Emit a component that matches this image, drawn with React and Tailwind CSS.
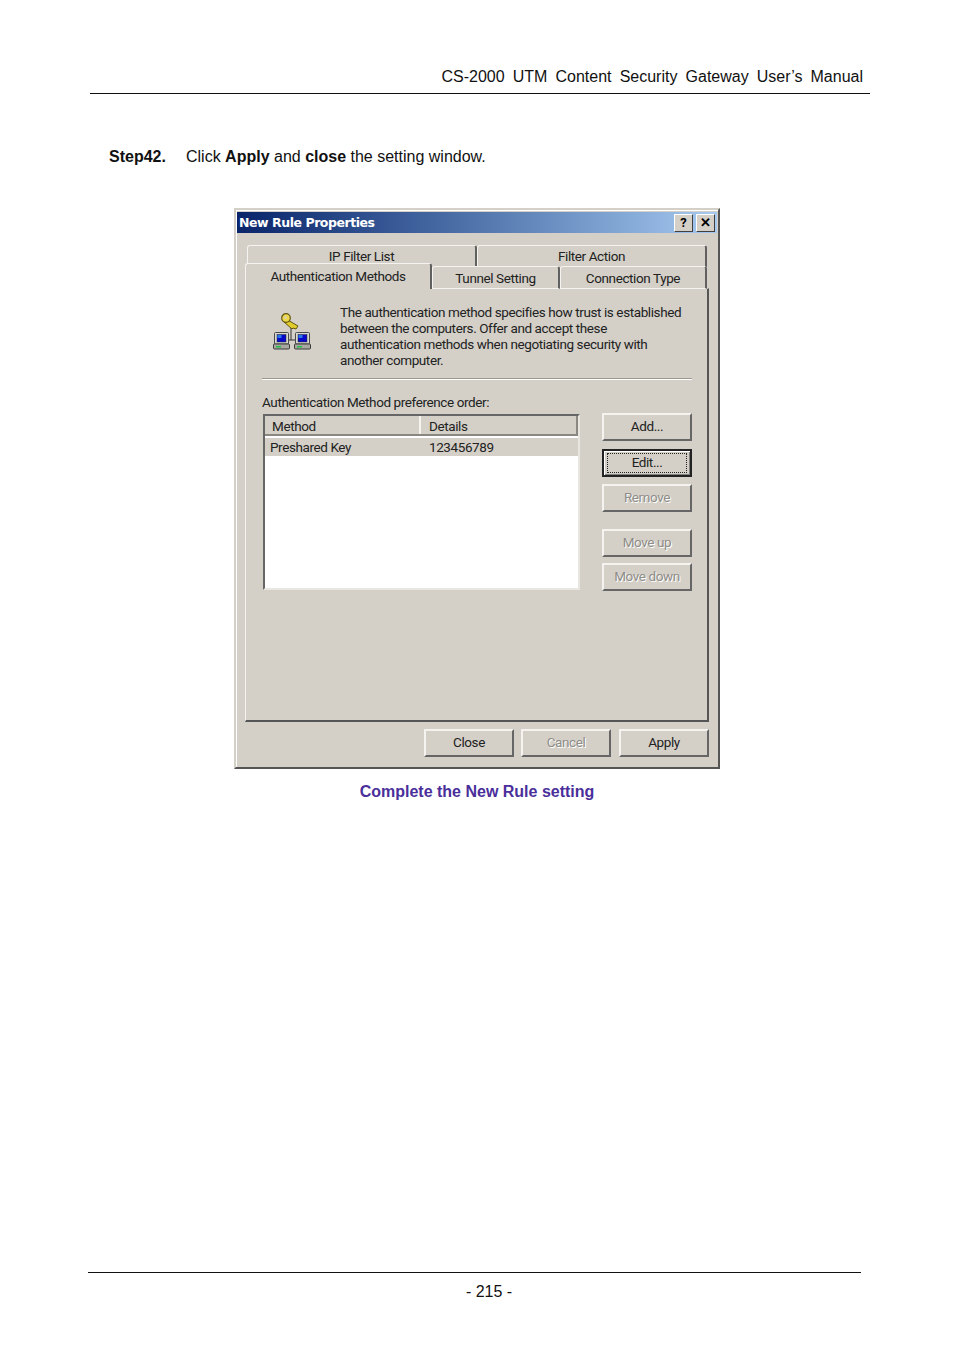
const ui = "font-['Roboto','Liberation_Sans',sans-serif] text-[13.5px] tracking-[-0.4px] text-[#222]";

function Btn({ children, disabled, focus, className = "" }) {
  return (
    <div
      className={`flex w-[90px] h-[28px] items-center justify-center bg-[#d4d0c8] shrink-0 pb-[2px] ${
        focus
          ? "border-2 border-[#222] shadow-[inset_1px_1px_0_#fff,inset_-1px_-1px_0_#808080]"
          : "border-t-2 border-l-2 border-t-[#f4f3f0] border-l-[#f4f3f0] border-r-2 border-b-2 border-r-[#666] border-b-[#666]"
      } ${className}`}
    >
      {focus ? (
        <div className="flex w-[80px] h-[20px] mt-[2px] items-center justify-center border border-dotted border-[#222] pb-[2px]">{children}</div>
      ) : (
        <span className={disabled ? "text-[#8f8d88] [text-shadow:1px_1px_0_#fff]" : ""}>{children}</span>
      )}
    </div>
  );
}

function Tab({ w, h = "h-[22px]", children, active, className = "" }) {
  return (
    <div
      className={`flex items-center justify-center ${w} ${h} bg-[#d4d0c8] rounded-t-[3px] border-l border-t border-l-[#f4f3f0] border-t-[#f4f3f0] border-r-2 border-r-[#606060] ${
        active ? "relative z-10" : ""
      } ${className}`}
    >
      {children}
    </div>
  );
}

function NetIcon() {
  return (
    <svg width="38" height="37" viewBox="0 0 38 37" className="shrink-0">
      <path d="M18 12v15M15 27h7" stroke="#333" strokeWidth="1" fill="none" />
      <path d="M13 6l12 7-2 3-3-1-1 1-8-7z" fill="#e0cc2c" stroke="#5f5510" strokeWidth="1" />
      <circle cx="13" cy="5" r="4.3" fill="#ecd84a" stroke="#5f5510" strokeWidth="1.2" />
      <circle cx="12.5" cy="4.5" r="1.2" fill="#d4d0c8" />
      {[0, 21].map((x) => (
        <g key={x} transform={`translate(${x} 19)`}>
          <rect x="1.5" y="0.5" width="14" height="11.5" rx="1" fill="#d8d8d2" stroke="#4a4a4a" />
          <rect x="4" y="2.5" width="9" height="7.5" fill="#0808c8" stroke="#333" strokeWidth="0.5" />
          <rect x="4.5" y="3" width="4" height="3" fill="#2a78e8" />
          <rect x="0.5" y="12" width="16" height="5" rx="1" fill="#a8a8a0" stroke="#3a3a3a" />
          <rect x="3" y="14" width="5" height="1.5" fill="#22c04a" />
        </g>
      ))}
    </svg>
  );
}

export default function App() {
  return (
    <div className="w-[954px] h-[1350px] bg-white overflow-hidden font-['Liberation_Sans',Arial,sans-serif] text-[16px] leading-[20px] text-[#111]">
      <div className="ml-[90px] w-[780px] h-[94px] border-b border-[#111] flex items-end justify-end pb-[6px] pr-[7px] [word-spacing:3.65px]">
        CS-2000 UTM Content Security Gateway User’s Manual
      </div>

      <div className="mt-[53px] ml-[109px] flex">
        <b className="w-[77px]">Step42.</b>
        <span>
          Click <b>Apply</b> and <b>close</b> the setting window.
        </span>
      </div>

      <div className={`mt-[41px] ml-[234px] w-[486px] h-[561px] bg-[#d4d0c8] border-2 border-t-[#d4d0c8] border-l-[#d4d0c8] border-r-[#555] border-b-[#555] shadow-[inset_1px_1px_0_#fff] p-[1px] pt-[2px] flex flex-col ${ui}`}>
        <div className="h-[21px] shrink-0 flex items-center justify-between bg-gradient-to-r from-[#0a246a] to-[#a6caf0] pl-[2px] pr-[2px]">
          <span className="font-['DejaVu_Sans',sans-serif] font-bold text-[12.5px] tracking-[-0.45px] text-white">New Rule Properties</span>
          <div className="flex gap-[3px]">
            {["?", "✕"].map((c) => (
              <div key={c} className="flex w-[19px] h-[18px] items-center justify-center bg-[#d4d0c8] border border-t-white border-l-white border-r-[#404040] border-b-[#404040] text-[13px] font-bold tracking-normal text-black">
                {c}
              </div>
            ))}
          </div>
        </div>

        <div className="flex ml-[10px] mt-[12px] w-[460px]">
          <Tab w="w-[230px]" className="pb-[1px]">IP Filter List</Tab>
          <Tab w="w-[230px]" className="pb-[1px]">Filter Action</Tab>
        </div>
        <div className="flex items-end ml-[8px] -mt-[2px] h-[24px] -mb-[1px] relative z-10">
          <Tab w="w-[187px]" h="h-[26px]" active className="pb-[1px]">Authentication Methods</Tab>
          <Tab w="w-[128px]" h="h-[23px]" className="border-b border-b-[#f4f3f0]">Tunnel Setting</Tab>
          <Tab w="w-[147px]" h="h-[23px]" className="border-b border-b-[#f4f3f0]">Connection Type</Tab>
        </div>

        <div className="ml-[8px] w-[464px] h-[434px] shrink-0 border-l border-t border-l-[#f4f3f0] border-t-[#f4f3f0] border-r-2 border-b-2 border-r-[#555] border-b-[#555] flex flex-col pl-[16px]">
          <div className="flex pt-[15px] leading-[16px] h-[89px]">
            <div className="ml-[11px] mt-[9px] w-[67px]"><NetIcon /></div>
            <p>
              The authentication method specifies how trust is established<br />
              between the computers. Offer and accept these<br />
              authentication methods when negotiating security with<br />
              another computer.
            </p>
          </div>
          <div className="w-[430px] h-[2px] bg-[#9a9890] border-b border-b-white" />
          <div className="mt-[12px] h-[20px] leading-[20px]">Authentication Method preference order:</div>
          <div className="flex mt-[2px]">
            <div className="ml-[1px] w-[317px] h-[176px] bg-white border-2 border-t-[#666] border-l-[#666] border-r-[#e8e6e0] border-b-[#e8e6e0] flex flex-col">
              <div className="flex h-[20px] bg-[#d4d0c8] border-b-2 border-b-[#8a8880] border-r-2 border-r-[#8a8880] leading-[20px] shrink-0">
                <div className="w-[156px] pl-[7px] border-r-2 border-r-[#f4f3f0]">Method</div>
                <div className="pl-[8px]">Details</div>
              </div>
              <div className="flex h-[18px] mt-[2px] bg-[#d4d0c8] leading-[18px]">
                <div className="w-[157px] pl-[5px]">Preshared Key</div>
                <div className="pl-[7px]">123456789</div>
              </div>
            </div>
            <div className="ml-[22px] flex flex-col -mt-[1px]">
              <Btn>Add...</Btn>
              <Btn focus className="mt-[8px]">Edit...</Btn>
              <Btn disabled className="mt-[7px]">Remove</Btn>
              <Btn disabled className="mt-[17px]">Move up</Btn>
              <Btn disabled className="mt-[6px]">Move down</Btn>
            </div>
          </div>
        </div>

        <div className="flex justify-end mt-[7px] gap-[7px] pr-[8px]">
          <Btn>Close</Btn>
          <Btn disabled>Cancel</Btn>
          <Btn className="ml-[1px]">Apply</Btn>
        </div>
      </div>

      <div className="mt-[13px] text-center font-bold text-[#4a2f9b]">Complete the New Rule setting</div>

      <div className="mt-[470px] ml-[88px] w-[773px] border-t border-[#111]" />
      <div className="mt-[9px] ml-[24px] text-center">- 215 -</div>
    </div>
  );
}
